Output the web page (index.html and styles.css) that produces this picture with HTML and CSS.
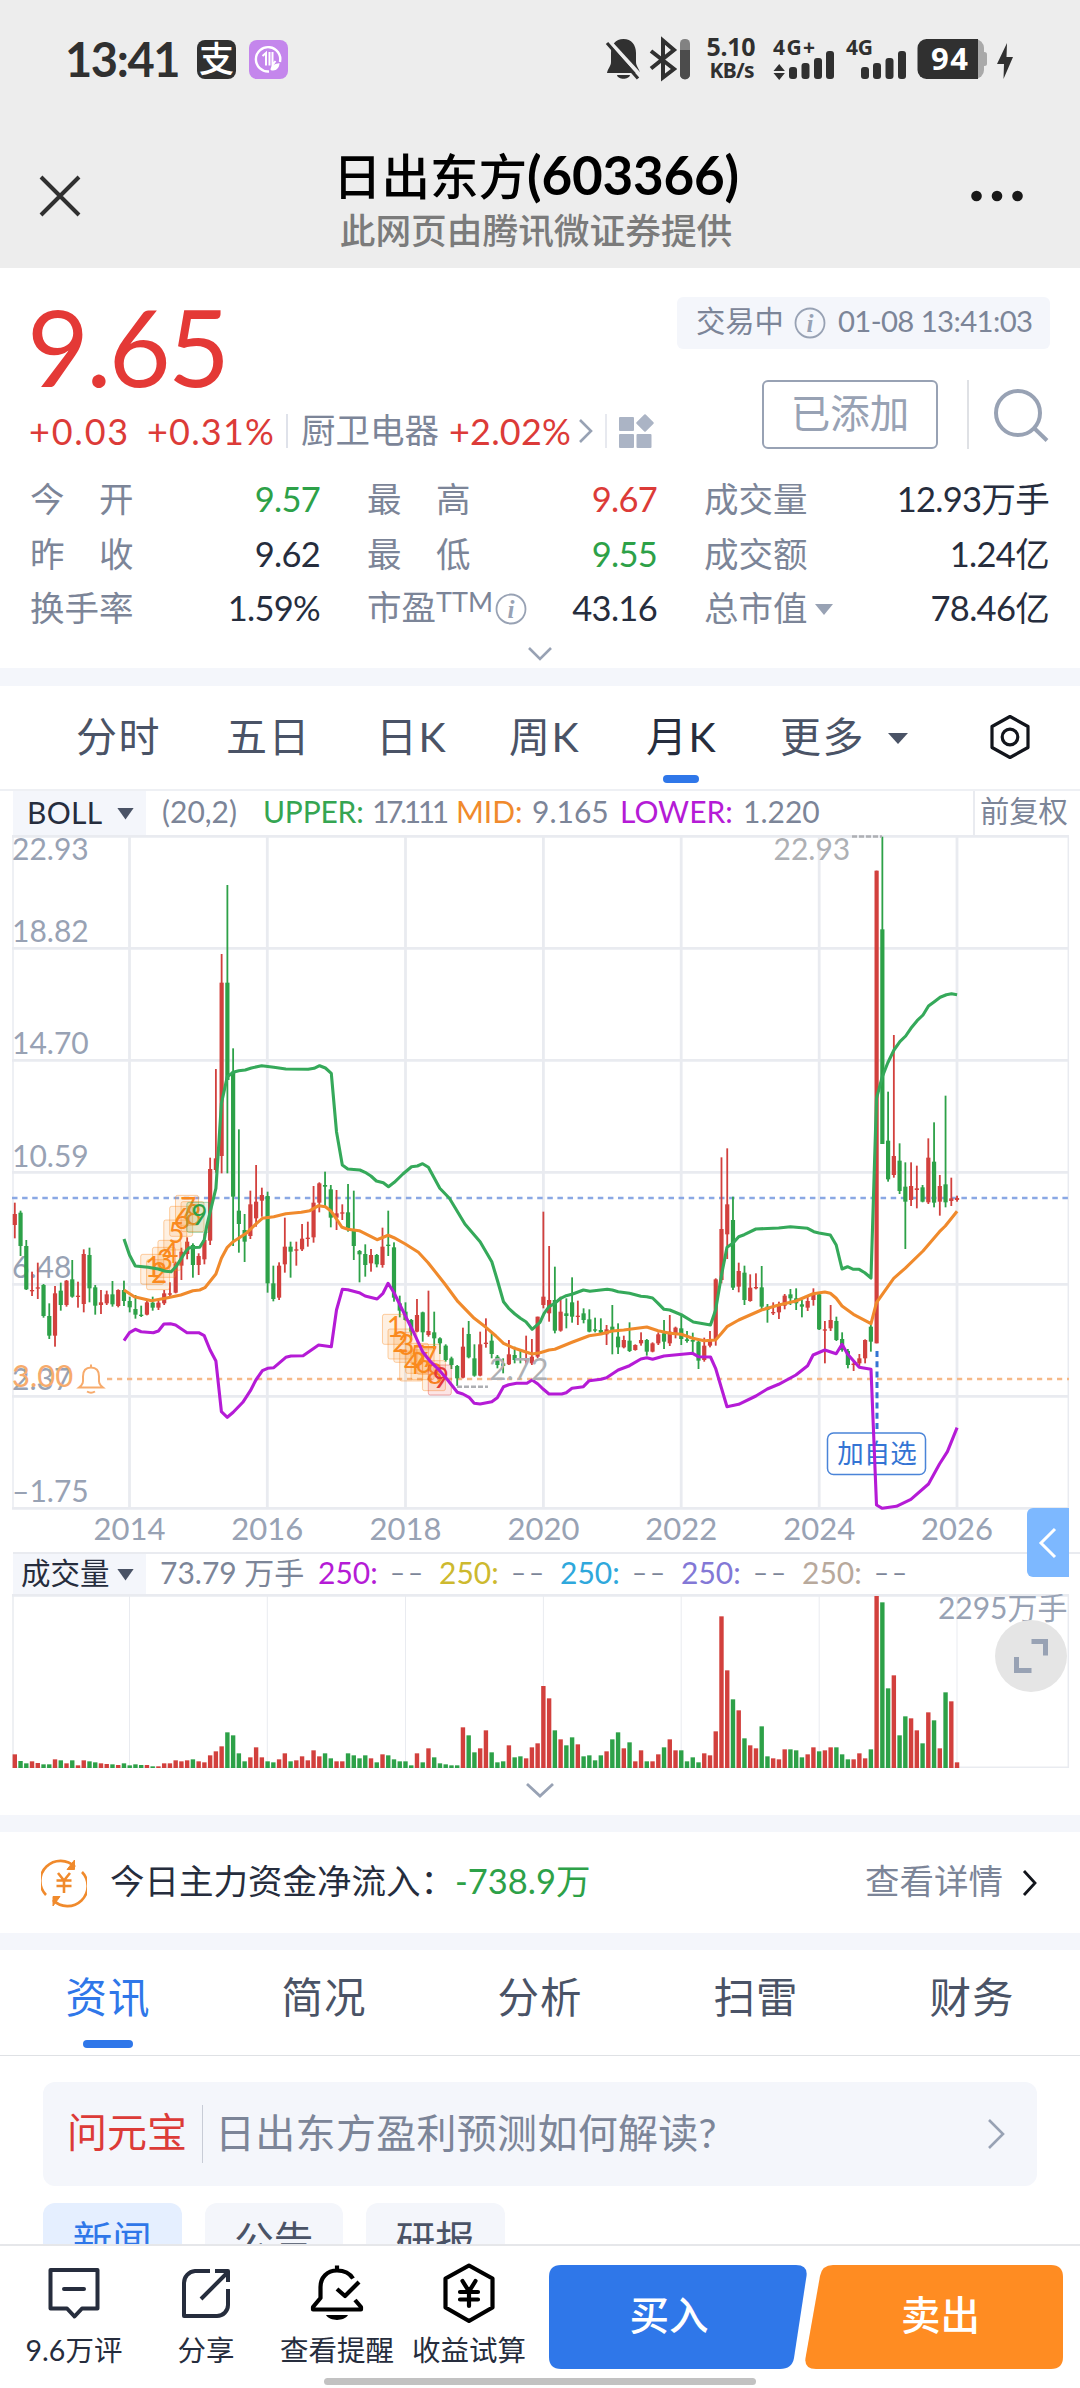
FILE: index.html
```html
<!DOCTYPE html>
<html lang="zh-CN">
<head>
<meta charset="utf-8">
<meta name="viewport" content="width=1080">
<title>日出东方(603366)</title>
<link rel="stylesheet" href="styles.css">
</head>
<body>
<div class="page">
  <header class="top">
    <div class="status">
      <span class="clock">13:41</span>
      <span class="app-badge app-pay">支</span>
      <span class="app-badge app-data">
        <svg width="39" height="39" viewBox="0 0 39 39" fill="none" stroke="#fff" stroke-width="2.4">
          <path d="M31 22A12.2 12.2 0 1 0 20 31.5"/>
          <path d="M13.500 16l3.500-3V25.500M20.500 25.500V12M23.500 12V25l3-4" stroke-width="2"/>
          <path d="M21.500 30c0-5 5-6 9-7 0 5-4 9-9 7z" fill="#fff" stroke="none"/>
        </svg>
      </span>
      <svg class="status-icons" width="420" height="60" viewBox="600 30 420 60" fill="#303030">
        <path d="M623.500 39c-8 0-12.500 6-12.500 14v9c0 4-3 6-4 11h33c-1-5-4-7-4-11v-9c0-8-4.500-14-12.500-14zM617 75h13c-1 5-12 5-13 0z"/>
        <path d="M609 41l32 35" stroke="#ededed" stroke-width="4"/>
        <path d="M607 43l31 35.500" stroke="#303030" stroke-width="3.200"/>
        <path d="M651 51l23 18-11 8.500V40.500L674 50l-23 18.500" fill="none" stroke="#303030" stroke-width="4"/>
        <rect x="680" y="39" width="10" height="40" rx="4.500" fill="#828282"/>
        <path d="M680 50h10v24.500a4.500 4.500 0 0 1-10 0z" fill="#4c4c4c"/>
        <text x="731" y="56" class="st" font-size="25" text-anchor="middle" textLength="49">5.10</text>
        <text x="732" y="78" class="st" font-size="21" text-anchor="middle" textLength="45">KB/s</text>
        <text x="773" y="54.500" class="st" font-size="21" textLength="42">4G+</text>
        <path d="M773.500 71l5.700-7 5.700 7zM773.500 73l5.700 7 5.700-7z"/>
        <rect x="789" y="67" width="8" height="12" rx="3"/><rect x="801.500" y="63" width="8" height="16" rx="3"/><rect x="814" y="58" width="8" height="21" rx="3"/><rect x="826" y="51" width="8" height="28" rx="3"/>
        <text x="846" y="54.500" class="st" font-size="21" textLength="27">4G</text>
        <rect x="861" y="67" width="8" height="12" rx="3"/><rect x="873" y="63" width="8" height="16" rx="3"/><rect x="885.500" y="58" width="8" height="21" rx="3"/><rect x="898" y="51" width="8" height="28" rx="3"/>
        <rect x="930" y="39" width="54" height="40" rx="9" fill="#a9a9a9"/><rect x="980" y="52" width="7" height="14" rx="2.500" fill="#a9a9a9"/>
        <path d="M926.500 39H978v40h-51.500a9 9 0 0 1-9-9V48a9 9 0 0 1 9-9z"/>
        <text x="949.500" y="69.500" font-size="31" text-anchor="middle" textLength="37" class="st bat">94</text>
        <path d="M1007 43l-10 21h7l-0.500 15L1013 57h-6.500z"/>
      </svg>
    </div>
    <div class="navbar">
      <svg width="44" height="44" viewBox="0 0 44 44" fill="none" stroke="#303030" stroke-width="4"><path d="M3 3l38 38M41 3L3 41"/></svg>
      <div class="nav-title">
        <h1>日出东方<span>(603366)</span></h1>
        <p>此网页由腾讯微证券提供</p>
      </div>
      <svg width="54" height="12" viewBox="0 0 54 12" fill="#191919"><circle cx="6.500" cy="6" r="5.300"/><circle cx="27" cy="6" r="5.300"/><circle cx="47.500" cy="6" r="5.300"/></svg>
    </div>
  </header>

  <section class="quote">
    <div class="quote-head">
      <div class="quote-price">
        <div class="price">9.65</div>
        <div class="change">
          <span class="red c1">+0.03</span><span class="red c2">+0.31%</span>
          <span class="sector">厨卫电器</span><span class="red c3">+2.02%</span>
          <svg class="c-arrow" width="16" height="26" viewBox="0 0 16 26" fill="none" stroke="#98a2b4" stroke-width="2.600"><path d="M2 2l11 11L2 24"/></svg>
          <svg class="c-grid" width="50" height="36" viewBox="0 0 50 36" fill="#abb4c5"><path d="M1 1v34" stroke="#dfe2ea" stroke-width="1.500"/><rect x="14" y="4" width="15" height="14" rx="1"/><rect x="14" y="21" width="15" height="14" rx="1"/><rect x="31.500" y="21" width="15" height="14" rx="1"/><rect x="33.500" y="3.500" width="13" height="13" rx="1" transform="rotate(45 40 10)"/></svg>
        </div>
      </div>
      <div class="quote-side">
        <div class="market-state">
          <span>交易中</span>
          <svg width="32" height="32" viewBox="0 0 32 32"><circle cx="16" cy="16" r="14.500" fill="none" stroke="#98a2b4" stroke-width="1.800"/><text x="16" y="24.500" class="info-i">i</text></svg>
          <span class="stamp">01-08 13:41:03</span>
        </div>
        <div class="actions">
          <span class="added">已添加</span>
          <span class="action-line"></span>
          <svg width="56" height="56" viewBox="0 0 56 56" fill="none" stroke="#98a2b4" stroke-width="4"><circle cx="25" cy="26" r="22"/><path d="M41 41l13 12.500"/></svg>
        </div>
      </div>
    </div>
    <div class="stats">
      <div><label>今　开</label><b class="green">9.57</b></div>
      <div><label>最　高</label><b class="red">9.67</b></div>
      <div><label>成交量</label><b>12.93万手</b></div>
      <div><label>昨　收</label><b>9.62</b></div>
      <div><label>最　低</label><b class="green">9.55</b></div>
      <div><label>成交额</label><b>1.24亿</b></div>
      <div><label>换手率</label><b>1.59%</b></div>
      <div><label>市盈<span class="ttm">TTM</span></label><svg class="pe-info" width="32" height="32" viewBox="0 0 32 32"><circle cx="16" cy="16" r="14.500" fill="none" stroke="#98a2b4" stroke-width="1.800"/><text x="16" y="24.500" class="info-i">i</text></svg><b>43.16</b></div>
      <div><label>总市值</label><svg class="caret" width="18" height="11" viewBox="0 0 18 11" fill="#98a2b4"><path d="M0 0h18L9 11z"/></svg><b>78.46亿</b></div>
    </div>
    <svg class="fold" width="28" height="16" viewBox="0 0 28 16" fill="none" stroke="#98a2b4" stroke-width="2.600"><path d="M3 2l11 11L25 2"/></svg>
  </section>

  <section class="kline">
    <nav class="periods">
      <span>分时</span><span>五日</span><span>日K</span><span>周K</span><span class="on">月K</span>
      <span class="more">更多<svg width="20" height="11" viewBox="0 0 20 11" fill="#4a5366"><path d="M0 0h20L10 11z"/></svg></span>
      <svg width="44" height="48" viewBox="0 0 44 48" fill="none" stroke="#12151c" stroke-width="3.200" stroke-linejoin="round"><path d="M22 3.500l18 10v21l-18 10-18-10v-21z"/><circle cx="22" cy="24" r="7.800"/></svg>
    </nav>
    <div class="boll">
      <span class="pick">BOLL<i class="tri"></i></span>
      <span>(20,2)</span><span class="up">UPPER:</span><span class="ls">17.111</span><span class="mid">MID:</span><span>9.165</span><span class="low">LOWER:</span><span>1.220</span>
      <span class="adjust">前复权</span>
    </div>
    <svg id="price" width="1080" height="717" viewBox="0 835 1080 717"></svg>
    <div class="vol-head">
      <span class="pick">成交量<i class="tri"></i></span>
      <span class="amount">73.79 万手</span>
      <span class="v1">250:</span><em>––</em><span class="v2">250:</span><em>––</em><span class="v3">250:</span><em>––</em><span class="v4">250:</span><em>––</em><span class="v5">250:</span><em>––</em>
    </div>
    <svg id="volume" width="1080" height="175" viewBox="0 1593 1080 175"></svg>
    <svg class="fold2" width="32" height="18" viewBox="0 0 32 18" fill="none" stroke="#98a2b4" stroke-width="2.800"><path d="M3 2l13 12L29 2"/></svg>
    <span class="drawer"><svg width="20" height="32" viewBox="0 0 20 32" fill="none" stroke="#fff" stroke-width="3"><path d="M17 2L3 16l14 14"/></svg></span>
    <span class="expand"><svg width="36" height="36" viewBox="0 0 36 36" fill="none" stroke="#98a2b4" stroke-width="5"><path d="M18.500 3.500h14v14M3.500 19v13.500h15"/></svg></span>
  </section>

  <section class="fund">
    <svg width="46" height="50" viewBox="0 0 46 50" fill="none" stroke="#f08a2c" stroke-width="2.600">
      <path d="M5 37a20 20 0 0 1 29-28M41 14a20 20 0 0 1-29 28"/>
      <path d="M33.500 2v9.500h-7.500zM12 48v-9.500h7z" fill="#f08a2c" stroke-width="1"/>
      <path d="M17 15l6 7.500 6-7.500M15.500 22.500h15M15.500 28h15M23 22v13"/>
    </svg>
    <span class="fund-label">今日主力资金净流入：</span><span class="green">-738.9万</span>
    <span class="detail">查看详情</span>
    <svg width="16" height="28" viewBox="0 0 16 28" fill="none" stroke="#12151c" stroke-width="2.800"><path d="M2 2l11 12L2 26"/></svg>
  </section>

  <section class="info">
    <nav class="tabs"><span class="on">资讯</span><span>简况</span><span>分析</span><span>扫雷</span><span>财务</span></nav>
    <div class="ask">
      <span class="ask-name">问元宝</span><span class="ask-text">日出东方盈利预测如何解读?</span>
      <svg width="20" height="32" viewBox="0 0 20 32" fill="none" stroke="#98a2b4" stroke-width="2.600"><path d="M2 2l14 14L2 30"/></svg>
    </div>
    <div class="chips"><span class="on">新闻</span><span>公告</span><span>研报</span></div>
  </section>

  <footer class="bar">
    <div class="tool t1">
      <svg width="60" height="64" viewBox="0 0 60 64" fill="none" stroke="#262d3d" stroke-width="4" stroke-linejoin="round"><path d="M6.500 9h47v38.500H38l-7.500 8-7.500-8H6.500zM20 28h20" stroke-linecap="round"/></svg>
      <span>9.6万评</span>
    </div>
    <div class="tool t2">
      <svg width="60" height="64" viewBox="0 0 60 64" fill="none" stroke="#262d3d" stroke-width="4"><path d="M34 10H19A12 12 0 0 0 8 22v33h33a11 11 0 0 0 11-11V28M39 10h13v11M25 38l27-27" stroke-linejoin="round"/></svg>
      <span>分享</span>
    </div>
    <div class="tool t3">
      <svg width="60" height="64" viewBox="0 0 60 64" fill="none" stroke="#000" stroke-width="4.200" stroke-linejoin="round"><path d="M46 17.500C42 11 36 9.500 30 9.500c-10 0-16.500 7-16.500 16.500v11L6 46v2.500h48V46l-6-7M30 9V4.500M30 28l8 7 14-14" /><path d="M19 54h22c-4 6.500-18 6.500-22 0z" fill="#000" stroke="none"/></svg>
      <span>查看提醒</span>
    </div>
    <div class="tool t4">
      <svg width="60" height="64" viewBox="0 0 60 64" fill="none" stroke="#000" stroke-width="4.200" stroke-linejoin="round" stroke-linecap="round"><path d="M30 4.500l23.500 13v29L30 60 6.500 46.500v-29zM23.500 20L30 30.500 36.500 20M21 31h18M21 38.500h18M30 31v14"/></svg>
      <span>收益试算</span>
    </div>
    <div class="trade">
      <svg width="516" height="104" viewBox="0 0 516 104"><path d="M12 0H247Q259 0 257.500 11L245 93Q243 104 231 104H12Q0 104 0 92V12Q0 0 12 0z" fill="#2f77e9"/><path d="M284 0H502Q514 0 514 12V92Q514 104 502 104H267Q255 104 256.500 93L271 11Q273 0 284 0z" fill="#ff8c22"/></svg>
      <span class="buy">买入</span><span class="sell">卖出</span>
    </div>
    <span class="home"></span>
  </footer>
</div>
<script src="chart.js"></script>
</body>
</html>
```
FILE: styles.css
```css
* { box-sizing: border-box; margin: 0; padding: 0; }
body { width: 1080px; background: #fff; color: #262d3d; font-family: Lato, "Noto Sans CJK SC", sans-serif; font-size: 34px; }
svg { display: block; flex: none; }
.page { position: relative; width: 1080px; height: 2388px; display: flex; flex-direction: column; overflow: hidden; }
.red { color: #dc3b38; }
.green { color: #2da148; }

.top { height: 268px; background: #ededed; }
.status { display: flex; align-items: center; height: 119px; padding-left: 65px; }
.clock { width: 132px; font-size: 47px; font-weight: 700; line-height: 60px; letter-spacing: -1.4px; color: #303030; position: relative; top: -1px; }
.app-badge { width: 39px; height: 39px; border-radius: 8px; margin-right: 13px; }
.app-pay { background: #303030; color: #fff; font-size: 35px; line-height: 36px; text-align: center; font-weight: 500; }
.app-data { background: #c486ec; }
.status-icons { margin-left: 299px; }
.st { font-weight: 700; font-family: "Noto Sans", sans-serif; }
.bat { fill: #fff; }
.navbar { display: flex; align-items: center; justify-content: space-between; height: 149px; padding: 5px 56px 0 38px; }
.nav-title { text-align: center; position: relative; left: 10px; top: 3px; }
.nav-title h1 { font-size: 48.500px; font-weight: 500; line-height: 62px; color: #000; white-space: nowrap; }
.nav-title h1 span { font-size: 53px; font-weight: 700; letter-spacing: -.2px; }
.nav-title p { font-size: 35.700px; line-height: 48px; color: #7b7b7b; font-weight: 500; }

.quote { height: 418px; padding: 29px 30px 0; border-bottom: 18px solid #f4f6fb; }
.quote-head { display: flex; justify-content: space-between; height: 175px; }
.quote-price { width: 640px; }
.price { font-size: 107px; line-height: 108px; height: 112px; color: #e43936; letter-spacing: -2.800px; margin: -6px 0 6px -3px; padding-top: 1px; }
.change { display: flex; align-items: center; height: 44px; margin: 5px 0 0 -1px; white-space: nowrap; letter-spacing: 1.800px; font-size: 36px; }
.c1 { width: 118px; }
.c2 { width: 139px; letter-spacing: 1.200px; }
.sector { color: #7c8598; font-size: 34.500px; letter-spacing: 0; width: 163px; padding-left: 13px; height: 34px; line-height: 32px; border-left: 2px solid #dfe2ea; }
.c3 { width: 129px; letter-spacing: .2px; }
.c-arrow { margin-right: 11px; }
.quote-side { width: 373px; display: flex; flex-direction: column; gap: 31px; }
.market-state { display: flex; align-items: center; height: 52px; padding-left: 19px; border-radius: 6px; background: #f4f6fb; color: #7c8598; font-size: 29.300px; gap: 12px; line-height: 48px; white-space: nowrap; }
.market-state span { margin-top: -4px; }
.market-state svg { margin-left: -2px; }
.stamp { letter-spacing: -.6px; }
.info-i { font: italic 700 25px "Liberation Serif", serif; fill: #98a2b4; text-anchor: middle; }
.actions { display: flex; align-items: center; height: 69px; padding-left: 85px; }
.added { width: 176px; height: 69px; border: 2px solid #98a2b4; border-radius: 6px; color: #98a2b4; font-size: 39.500px; line-height: 62px; text-align: center; }
.action-line { width: 2px; height: 69px; margin: 0 24px 0 29px; background: #dfe1e5; }
.stats { display: grid; grid-template-columns: 290px 290px 345px; column-gap: 47px; grid-auto-rows: 54.500px; line-height: 50px; }
.stats div { display: flex; align-items: center; }
.stats label { color: #7c8598; font-size: 34.500px; white-space: nowrap; }
.stats b { margin-left: auto; font-weight: 400; font-size: 34.500px; letter-spacing: -.7px; }
.ttm { font-size: 27px; position: relative; top: -8px; }
.pe-info { margin: 2px 0 0 2px; }
.caret { margin: 3px 0 0 7px; }
.fold { margin: 10px auto 0; }

.kline { position: relative; height: 1146px; border-bottom: 17px solid #f4f6fb; }
.periods { display: grid; grid-template-columns: 150px 150px 133px 137px 134px 208px 44px; align-items: center; height: 105px; padding: 0 0 2px 76px; border-bottom: 2px solid #eef0f4; font-size: 41px; letter-spacing: 1.500px; line-height: 60px; color: #4a5366; }
.periods .on { position: relative; color: #262d3d; }
.periods .on::after { content: ""; position: absolute; left: 17px; top: 68px; width: 36px; height: 8px; border-radius: 4px; background: #2f77e9; }
.more { display: flex; align-items: center; gap: 23px; }
.more svg { margin-top: 4px; }
.boll { display: grid; grid-template-columns: 149px 101px 109px 84px 76px 88px 123px 230px 107px; height: 44px; padding-left: 13px; line-height: 40px; font-size: 30px; color: #7c8598; white-space: nowrap; }
.pick { display: flex; align-items: center; width: 133px; background: #f4f6fb; color: #262d3d; padding-left: 14px; }
.boll .pick { height: 45px; padding-bottom: 4px; letter-spacing: .3px; }
.tri { width: 17px; height: 12px; margin: 4px 12px 0 auto; background: #4a5366; clip-path: polygon(0 0, 100% 0, 50% 100%); }
.up { color: #35a552; letter-spacing: -.2px; }
.mid { color: #f08a2c; }
.low { color: #b51bd6; }
.ls { letter-spacing: -3.400px; }
.adjust { border-left: 2px solid #e9ebf0; padding-left: 5px; font-size: 29.300px; }
.vol-head { display: grid; grid-template-columns: 147px 158px 72px 49px 72px 49px 72px 49px 72px 49px 72px 49px; height: 42px; border-top: 2px solid #e9ebf0; margin-left: 13px; line-height: 36px; font-size: 30px; color: #7c8598; white-space: nowrap; }
.vol-head .pick { padding-left: 8px; font-size: 29.500px; padding-bottom: 3px; }
.vol-head em { font-style: normal; letter-spacing: 3px; font-size: 26px; }
.v1 { color: #b51bd6; } .v2 { color: #cdb92f; } .v3 { color: #2fa8dc; } .v4 { color: #8378d6; } .v5 { color: #b8a99c; }
.fold2 { margin: 13px auto 0; }
.drawer { position: absolute; left: 1027px; top: 822px; width: 42px; height: 69px; border-radius: 6px 0 0 6px; background: #7db8ff; display: flex; align-items: center; justify-content: center; }
.expand { position: absolute; left: 995px; top: 934px; width: 72px; height: 72px; border-radius: 50%; background: #e5e5e5; display: flex; align-items: center; justify-content: center; }
.ax { font-size: 30px; fill: #98a2b4; }
.ticks { font-size: 31px; text-anchor: middle; }

.fund { display: flex; align-items: center; height: 118px; padding: 0 42px 0 41px; border-bottom: 17px solid #f4f6fb; font-size: 34.500px; line-height: 50px; white-space: nowrap; }
.fund-label { margin-left: 23px; }
.detail { margin: 0 19px 0 auto; color: #7c8598; }
.fund span { position: relative; top: -2px; }

.info { height: 294px; overflow: hidden; }
.tabs { display: grid; grid-template-columns: repeat(5, 1fr); height: 106px; border-bottom: 1px solid #dfe1e5; text-align: center; font-size: 41.500px; line-height: 95px; letter-spacing: 1px; color: #4a5366; }
.tabs .on { position: relative; color: #2f77e9; }
.tabs .on::after { content: ""; position: absolute; left: 83px; top: 90px; width: 50px; height: 8px; border-radius: 4px; background: #2f77e9; }
.ask { display: flex; align-items: center; height: 104px; margin: 26px 43px 0; padding: 0 30px 0 24px; border-radius: 12px; background: #f4f6fb; font-size: 40px; line-height: 58px; white-space: nowrap; }
.ask-name { width: 136px; color: #dc3b38; border-right: 1px solid #c8ccd6; line-height: 54px; padding-bottom: 4px; }
.ask-text { margin: -3px auto 0 12px; color: #7c8598; letter-spacing: .3px; }
.chips { display: flex; gap: 23px; margin: 17px 43px 0; }
.chips span { width: 138.500px; height: 78px; border-radius: 12px 12px 0 0; background: #f4f6fb; text-align: center; font-size: 39.500px; line-height: 74px; color: #4a5366; }
.chips .on { background: #e5efff; color: #2f77e9; }

.bar { position: relative; height: 144px; border-top: 2px solid #e6e7ea; background: #fff; display: flex; }
.tool { display: flex; flex-direction: column; align-items: center; padding-top: 15px; font-size: 28.500px; line-height: 40px; white-space: nowrap; }
.tool span { margin-top: 5px; }
.t1 { width: 148px; } .t2 { width: 116px; } .t3 { width: 146px; } .t4 { width: 118px; }
.trade { display: grid; grid-template-columns: 258px 258px; margin: 19px 0 0 21px; height: 104px; }
.trade svg { grid-area: 1 / 1 / 2 / 3; }
.trade span { text-align: center; color: #fff; font-size: 39.500px; line-height: 100px; font-weight: 500; }
.buy { grid-area: 1 / 1; margin-right: 18px; }
.sell { grid-area: 1 / 2; margin-left: 9px; }
.home { position: absolute; left: 324px; top: 132px; width: 432px; height: 7px; border-radius: 4px; background: #c2c2c2; }
```
FILE: chart.js
```js
// Monthly candles: colour, high, body top, body bottom, low, volume top (thirds of a pixel)
const rows = `R 158 192 225 265 640|G 182 188 288 318 660|G 270 288 418 420 667|R 365 420 424 438 661|R 338 412 416 447 666|G 402 405 498 503 670|G 460 498 557 567 670|R 408 430 557 590 655|G 398 422 465 482 658|R 390 392 465 470 667|G 330 388 440 443 658|R 395 437 441 473 673
R 298 312 462 487 658|G 293 315 415 457 661|G 405 412 467 494 664|R 420 457 465 492 667|R 422 433 460 465 669|G 393 433 463 470 670|R 418 420 468 472 672|G 392 420 453 468 667|G 440 453 472 487 673|G 435 477 494 506 670|G 467 494 498 501 672|R 453 457 494 496 672
G 440 458 473 482 676|R 452 458 473 480 676|R 420 430 460 465 667|R 397 430 434 442 667|R 335 340 428 430 658|R 293 305 347 390 661|R 262 275 312 328 658|G 280 285 345 383 655|R 310 318 345 375 661|R 250 270 328 343 664|R 23 57 272 285 643|R -243 25 60 68 631
R -588 -502 18 70 616|G -795 -502 -210 70 574|G -305 -235 140 288 583|G -62 182 222 308 637|G 192 240 275 336 661|R 122 163 258 267 649|R 45 155 205 230 619|R 113 135 152 200 649|G 125 138 400 428 661|G 347 400 447 454 664|R 337 347 443 450 655|R 203 290 343 368 637
G 275 290 305 383 661|R 275 298 302 347 658|R 222 266 298 303 646|R 215 263 267 290 658|R 108 158 262 278 628|R 97 100 158 187 646|G 65 105 110 170 637|G 105 118 203 232 652|R 120 190 203 240 661|R 163 187 191 210 661|G 102 187 238 245 637|G 122 240 288 330 643
G 300 303 313 397 652|G 283 312 345 380 643|R 297 315 340 365 652|G 312 315 343 352 664|R 233 290 345 353 640|G 182 284 288 318 643|G 277 292 443 455 655|G 437 460 482 502 661|G 457 485 510 512 661|G 507 510 545 570 673|R 447 495 545 547 637|G 485 487 547 575 664
R 422 543 555 560 622|G 485 547 565 597 649|G 562 565 580 612 667|G 583 587 630 635 670|G 620 625 645 657 673|G 645 648 685 708 673|R 533 590 683 685 559|G 513 552 622 625 583|G 583 625 677 680 634|R 545 583 677 679 622|R 505 578 582 593 568|G 550 572 612 625 634
G 615 620 645 655 664|G 625 640 648 670 661|R 570 613 643 645 613|G 590 615 630 640 649|G 598 625 630 640 646|R 557 625 632 645 652|R 567 620 640 645 619|R 500 500 620 625 607|R 185 440 465 475 435|R 288 450 490 515 472|G 350 450 542 550 568|R 440 485 542 545 595
G 445 490 498 535 613|G 382 457 500 518 589|R 452 497 501 525 610|G 475 490 510 520 646|G 478 508 545 547 643|G 503 538 542 547 658|G 505 540 548 550 643|R 525 538 553 585 631|G 465 530 545 613 595|G 520 560 592 612 574|R 557 570 592 595 622|G 517 572 603 606 604
R 583 585 600 602 661|R 547 570 580 587 628|G 567 570 605 617 661|R 577 580 605 607 661|R 547 553 580 585 640|G 510 550 575 597 619|R 495 545 580 588 595|R 530 533 555 565 628|G 497 535 567 585 628|G 543 568 573 578 661|G 548 570 575 610 649|G 570 575 632 657 664
R 563 587 630 635 637|R 543 570 587 592 643|R 385 388 567 587 571|R 22 237 390 400 226|R -5 163 253 327 388|G 140 210 413 420 475|R 338 363 410 427 508|G 347 368 450 465 592|R 373 413 453 455 613|R 370 411 415 418 622|G 348 412 470 478 556|G 462 470 480 518 646
R 457 486 490 495 652|R 455 463 487 507 655|R 432 437 467 478 625|G 417 433 445 465 625|G 415 445 460 480 628|G 450 463 470 502 649|R 440 453 473 483 640|R 415 430 450 467 619|G 430 433 538 540 631|R 513 538 542 640 628|R 465 510 535 543 619|G 500 513 570 573 619
G 547 567 600 605 640|G 597 603 645 655 655|R 633 641 645 663 655|R 612 625 640 648 637|R 568 570 625 640 652|G 525 530 575 605 625|R -838 -838 580 580 165|G -940 -662 -18 -18 184|G -175 -28 88 95 442|R -345 18 75 83 403|G -20 32 123 132 583|G 37 110 155 297 526
R 37 108 150 168 532|R 47 115 120 175 568|G 105 112 155 157 607|R -35 23 157 162 514|G -83 35 158 172 538|R 75 108 155 197 622|G -163 103 157 172 454|R 83 145 153 168 481|R 137 144 150 155 664`
  .split(/[|\n]/).map(r => r.trim().split(' '));

const KX = 2.9037;
const Y = v => 1150 + v / 3;
const color = c => (c === 'R' ? '#d2403d' : '#2da148');
const xAt = i => 14.8 + i * 5.7454;
const curve = (pts, stroke) => {
  const d = pts.trim().split(/\s+/).map(p => {
    const [x, y] = p.split(',').map(Number);
    return (x / KX).toFixed(1) + ',' + Y(y).toFixed(1);
  }).join(' ');
  return `<polyline points="${d}" fill="none" stroke="${stroke}" stroke-width="3.1" stroke-linejoin="round"/>`;
};
const years = [129.5, 267.3, 405.5, 543.4, 681.2, 819.2, 957];

let s = '<g fill="none" stroke="#e9ebf0" stroke-width="2.8">';
[836.3, 948.3, 1060.3, 1172.4, 1284.4, 1396.4, 1508.3].forEach(y => { s += `<path d="M12 ${y}H1069"/>`; });
years.concat([1068.3, 13]).forEach(x => { s += `<path d="M${x} 836V1508" ${x > 1060 || x < 20 ? 'stroke-width="1.5"' : ''}/>`; });
s += '</g>';
s += '<path d="M12 1198H1068" stroke="#8aa8e4" stroke-width="2.6" stroke-dasharray="5.5 4.6"/>';
s += '<path d="M107 1379H1069" stroke="#f6b887" stroke-width="2.6" stroke-dasharray="5.200 4.8"/>';
s += '<g class="ax">';
[['22.93', 860], ['18.82', 942], ['14.70', 1054], ['10.59', 1166.5], ['6.48', 1278], ['2.37', 1390], ['–1.75', 1501.5]]
  .forEach(([t, y]) => { s += `<text x="12" y="${y}">${t}</text>`; });
s += '</g><g class="ax ticks">';
years.forEach((x, i) => { s += `<text x="${x}" y="1539.500">${2014 + i * 2}</text>`; });
s += '</g>';

rows.forEach(([c, h, t, b, l], i) => {
  const x = xAt(i);
  s += `<g fill="${color(c)}"><rect x="${x - 0.9}" y="${Y(+h)}" width="1.8" height="${(l - h) / 3}"/>` +
    `<rect x="${x - 2.1}" y="${Y(+t)}" width="4.2" height="${Math.max(1.3, (b - t) / 3)}"/></g>`;
});

// Setup-count markers: value, centre x, centre y, colour
const marks = [[1,442,358],[2,459,374],[3,476,337],[4,492,316],[5,509,255],[6,526,214],[7,543,181],[8,559,200],[9,576,202,'#2da148'],
  [1,1144,538],[2,1160,582],[3,1177,592],[4,1194,648],[5,1211,625],[6,1227,644],[7,1244,628],[8,1260,677],[9,1277,690,'#e43936']];
marks.forEach(([n, x, y, c = '#fb8a1e']) => {
  const cx = x / KX, cy = Y(y);
  s += `<rect x="${cx - 11.5}" y="${cy - 15}" width="23" height="30" rx="2" fill="${c}" fill-opacity=".13" stroke="${c}" stroke-opacity=".4"/>` +
    `<text x="${cx + 1}" y="${cy + 8}" font-size="28" text-anchor="middle" fill="${c}">${n}</text>`;
});

s += curve(`360,267 376,315 393,348 430,352 460,357 480,364 497,365 513,347 540,303 550,293 580,292 593,270 600,230 627,115 633,20 643,-140 660,-220 677,-233 693,-238 712,-240 730,-246 760,-253 795,-248 830,-243 895,-242 912,-245 928,-253 945,-246 962,-230 977,-55 994,45 1010,57 1045,60 1060,67 1077,78 1093,93 1113,98 1128,110 1145,97 1170,72 1195,50 1212,48 1227,41 1244,52 1277,115 1305,145 1350,222 1394,275 1428,335 1444,390 1462,455 1477,475 1495,492 1511,505 1527,515 1545,538 1568,517 1580,490 1594,470 1611,460 1628,445 1644,437 1663,432 1694,420 1713,424 1763,418 1778,420 1795,425 1828,430 1861,439 1878,440 1895,444 1911,460 1928,478 1945,480 1978,494 2013,516 2063,525 2078,480 2095,375 2111,292 2128,280 2145,260 2161,254 2195,237 2261,234 2295,230 2345,235 2363,245 2378,249 2411,255 2428,285 2445,357 2461,350 2478,358 2495,358 2511,368 2529,384 2545,-155 2562,-220 2578,-262 2596,-300 2613,-325 2630,-342 2645,-365 2663,-388 2680,-405 2696,-432 2713,-445 2730,-458 2748,-466 2763,-469 2779,-466`, '#35a95a');
s += curve(`360,420 390,440 440,452 480,445 525,435 560,422 580,420 595,413 627,372 643,325 660,292 677,275 715,250 745,220 762,205 795,200 830,191 875,187 900,182 925,167 945,170 960,182 977,207 993,232 1010,238 1043,242 1095,269 1127,256 1144,263 1177,282 1215,307 1243,338 1290,400 1330,455 1377,505 1411,532 1440,558 1462,580 1494,595 1545,612 1568,608 1578,605 1594,600 1611,598 1661,577 1711,557 1745,552 1778,543 1811,540 1878,531 1911,542 1945,550 1978,553 2011,565 2045,572 2078,570 2095,550 2111,530 2145,510 2211,480 2261,465 2311,453 2361,431 2395,426 2411,430 2428,445 2445,468 2478,493 2529,521 2545,458 2595,385 2628,355 2680,303 2728,245 2745,228 2779,184`, '#f08a2c');
s += `<rect x="827.500" y="1433" width="98" height="41.500" rx="6" fill="#fff" stroke="#4a84d8" stroke-width="1.500"/>`;
s += `<text x="877" y="1462.500" text-anchor="middle" font-size="26.500" fill="#3474d4">加自选</text>`;
s += curve(`360,572 376,548 393,538 410,545 445,548 460,543 476,522 495,521 510,525 543,548 577,548 593,557 610,600 627,633 643,785 660,802 677,787 705,757 727,722 743,690 762,662 777,655 795,653 830,622 845,618 880,617 925,585 962,590 977,480 994,418 1010,419 1043,428 1060,438 1095,447 1112,430 1127,400 1144,428 1177,497 1200,545 1227,605 1250,635 1277,662 1300,690 1328,727 1344,732 1362,742 1377,760 1394,762 1428,755 1444,743 1462,710 1477,704 1500,700 1530,700 1545,690 1562,702 1578,718 1594,732 1631,732 1644,728 1661,715 1694,710 1711,692 1745,688 1761,683 1795,660 1828,647 1861,627 1878,623 1895,628 1928,618 2011,610 2028,620 2063,621 2078,655 2095,715 2111,770 2145,763 2195,738 2228,717 2261,703 2311,675 2345,647 2361,615 2395,600 2428,611 2445,583 2461,612 2495,652 2529,658 2545,1065 2562,1075 2603,1069 2645,1048 2696,1002 2728,942 2751,905 2779,833`, '#b51bd6');
s += '<path d="M877 1351V1431" stroke="#3474d4" stroke-width="3" stroke-dasharray="6 4.300"/>';
s += '<g fill="#aeb0b4" font-size="30"><text x="773.500" y="860">22.93</text><text x="489" y="1380">2.72</text></g>';
s += '<path d="M852 836.500H882M457 1386.700H488" stroke="#aeb0b4" stroke-width="2.500" stroke-dasharray="5 2"/>';
s += '<text x="12" y="1386.500" font-size="31" fill="#f7ab6c">3.00</text>';
s += '<path d="M79 1387.500c5-4 4-6 4-11 0-6 3-9 8-9s8 3 8 9c0 5-1 7 4 11zM91 1367v-2.500M87 1391.500q4 2.500 8 0" fill="none" stroke="#f7ab6c" stroke-width="2"/>';
document.getElementById('price').innerHTML = s;

let v = '<g fill="none" stroke="#e9ebf0"><path d="M12 1594.300H1069" stroke-width="2.800"/><path d="M12 1766.300H1068.300V1594M13 1594V1766" stroke-width="1.500"/>';
years.forEach(x => { v += `<path d="M${x} 1595V1766"/>`; });
v += '</g><text x="1067.500" y="1617.500" text-anchor="end" class="ax">2295万手</text>';
rows.forEach((r, i) => {
  const y = 1540 + r[5] / 3;
  v += `<rect x="${xAt(i) - 2.200}" y="${y}" width="4.400" height="${1767 - y}" fill="${color(r[0])}"/>`;
});
document.getElementById('volume').innerHTML = v;
```
